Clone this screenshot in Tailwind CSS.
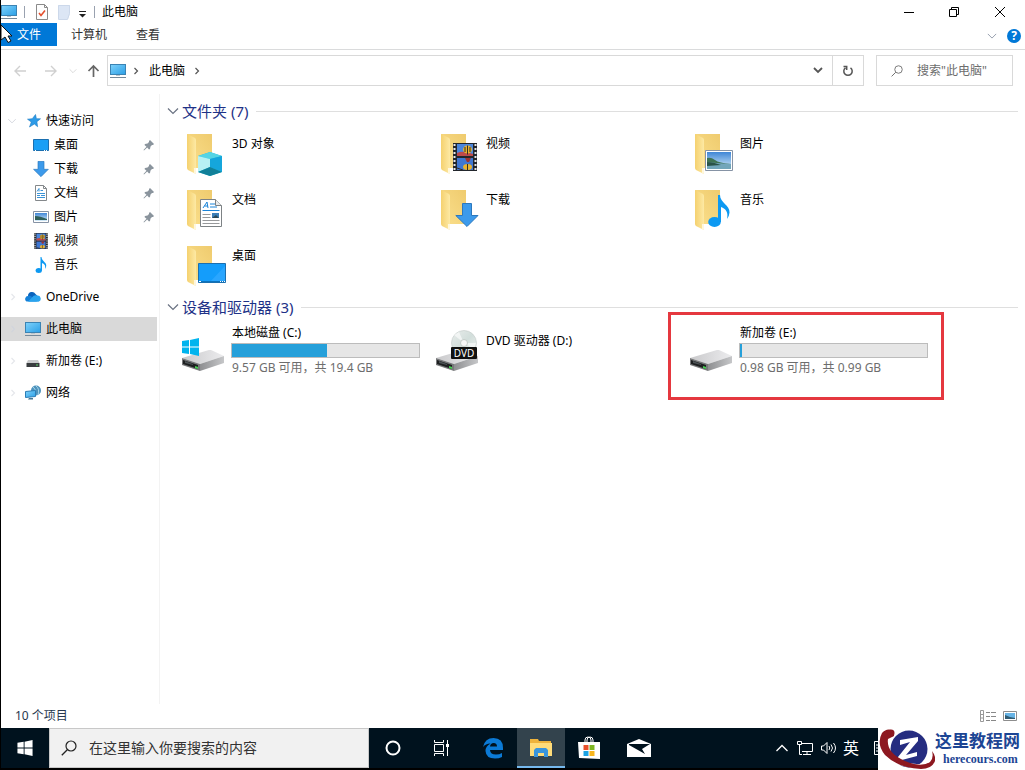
<!DOCTYPE html>
<html lang="zh-CN">
<head>
<meta charset="utf-8">
<meta name="viewport" content="width=device-width, initial-scale=1">
<title>此电脑</title>
<script src="https://cdn.jsdelivr.net/npm/@tailwindcss/browser@4"></script>
</head>
<body class="relative flex min-h-screen flex-col border-l border-black bg-white font-['Noto_Sans','Noto_Sans_CJK_SC',sans-serif] text-xs leading-4 text-black">

<!-- Shared icon symbols -->
<svg class="absolute h-0 w-0" aria-hidden="true">
  <defs>
    <linearGradient id="gFlap" x1="0" x2="1"><stop offset="0" stop-color="#f5d16f"/><stop offset="1" stop-color="#fde9a4"/></linearGradient>
    <linearGradient id="gBack" x1="0" y1="1" x2="1" y2="0"><stop offset="0" stop-color="#fbe08d"/><stop offset="1" stop-color="#efcb6e"/></linearGradient>
    <linearGradient id="gScreen" x1="0" y1="0" x2="1" y2="1"><stop offset="0" stop-color="#7fd2fb"/><stop offset="1" stop-color="#2b9fe6"/></linearGradient>
    <linearGradient id="gTop" x1="0" x2="1"><stop offset="0" stop-color="#c9c9cb"/><stop offset="1" stop-color="#ececee"/></linearGradient>
    <linearGradient id="gSide" x1="0" x2="1"><stop offset="0" stop-color="#8e8f91"/><stop offset="1" stop-color="#c6c7c9"/></linearGradient>
    <linearGradient id="gSky" x1="0" y1="0" x2="0" y2="1"><stop offset="0" stop-color="#3f86d6"/><stop offset="1" stop-color="#d6ecf8"/></linearGradient>
    <linearGradient id="gDisc" x1="0" y1="0" x2="1" y2="1"><stop offset="0" stop-color="#e9eceb"/><stop offset=".5" stop-color="#d2dedb"/><stop offset="1" stop-color="#f1f3f2"/></linearGradient>
    <symbol id="folder" viewBox="0 0 48 48">
      <path d="M5 4h25v34H12z" fill="url(#gBack)"/>
      <path d="M5 4l8 4q1 1 1 2v34l-8-4q-1-1-1-2z" fill="url(#gFlap)"/>
      <path d="M14 38v6l-2-1v-5z" fill="#fff7dc"/>
    </symbol>
    <symbol id="drive" viewBox="0 0 48 48">
      <path d="M0 33L27 25q1 0 2 0l13 6-24 8z" fill="url(#gTop)"/>
      <path d="M18 39l24-8v7L18 46z" fill="url(#gSide)"/>
      <path d="M0 33l18 6v7L0 40z" fill="#77787a"/>
      <path d="M1 35l15 5v4L1 39z" fill="#1d1f20"/>
      <path d="M3 36l8 3v1l-8-2z" fill="#4d5356"/>
      <path d="M13 41l3 1v2l-3-1z" fill="#48d152"/>
    </symbol>
    <symbol id="monitor" viewBox="0 0 16 16">
      <rect x=".5" y="1.5" width="15" height="10" fill="url(#gScreen)" stroke="#3b83b3"/>
      <path d="M6 12h4v1H6z" fill="#b8c4cc"/><path d="M0 14.5h16" stroke="#75899a"/>
    </symbol>
    <symbol id="desktop" viewBox="0 0 28 20">
      <path d="M.5.5h27v19H.5z" fill="#149dfb" stroke="#1a6fb0"/>
      <path d="M12 19L27 3v16z" fill="#2aa6ff"/><path d="M1 18.5h26" stroke="#0c73bd"/>
      <path d="M1 18.5h2M22 18.5h1M24 18.5h1M26 18.5h1" stroke="#fff"/>
    </symbol>
    <symbol id="down" viewBox="0 0 24 24">
      <path d="M7.500 .5h9v12h6.500L12 23.500.8 12.500h6.700z" fill="#3c9aeb" stroke="#2c78bd"/>
    </symbol>
    <symbol id="doc" viewBox="0 0 22 28">
      <path d="M.5.5h15l6 6v21H.5z" fill="#fff" stroke="#7d8285"/><path d="M15.500.5v6h6" fill="#e8eaeb" stroke="#7d8285"/>
      <path d="M3 9l4-6 1 6M4.500 7H8M10 5h5M10 8h7M2.500 11.500h17" fill="none" stroke="#1a84d8"/>
      <path d="M2.500 15.500h8M2.500 18.500h8M2.500 21.500h17M2.500 24.500h17" stroke="#97999b"/>
      <path d="M12 14h7v5h-7z" fill="#3d7fb8"/><path d="M12 19l4-3 3 3z" fill="#2b4855"/>
    </symbol>
    <symbol id="photo" viewBox="0 0 28 21">
      <path d="M.5.5h27v20H.5z" fill="#fff" stroke="#8693a5"/>
      <path d="M2 2h24v17H2z" fill="url(#gSky)"/>
      <path d="M2 8q4-1 8 2t16 4v1H2z" fill="#3f7353"/><path d="M2 12q8 1 24 2v5H2z" fill="#72a6ba"/><path d="M2 12q6 0 14 3l-14 1z" fill="#2a5347"/>
    </symbol>
    <symbol id="film" viewBox="0 0 24 28">
      <path d="M0 0h24v28H0z" fill="#22262c"/>
      <path d="M1.500 1v26M22.500 1v26" stroke="#e9e9e9" stroke-width="2" stroke-dasharray="2 2"/>
      <path d="M4 1h16v12H4z" fill="#4b86dc"/><path d="M4 15h16v12H4z" fill="#3f77d2"/>
      <path d="M4 10q6-3 16 1v2H4z" fill="#be4a4a"/>
      <ellipse cx="14.500" cy="6.500" rx="4.500" ry="4" fill="#e9b32f"/><path d="M14.500 2.500v9M12 4v5M17 4v5" stroke="#322c25"/>
      <path d="M12 15h6l-2 4h-2z" fill="#9c3333"/><ellipse cx="14.500" cy="24" rx="4.500" ry="3" fill="#e9b32f"/><path d="M14.500 21v6M4 25l6 2" stroke="#322c25"/>
    </symbol>
    <symbol id="note" viewBox="0 0 22 32">
      <ellipse cx="6.500" cy="27" rx="6.300" ry="5" fill="#0d99f2"/>
      <path d="M10 0h2c0 8 10 10 9.500 17.500q-.3 4-2.500 6.500c1.500-7-1-10-6-12v15h-3z" fill="#0d99f2"/>
    </symbol>
    <symbol id="winlogo" viewBox="0 0 17 18">
      <path d="M0 3l7-1v6.500H0zM8 2l9-2v8.500H8zM0 9.500h7V16l-7-1zM8 9.500h9V18l-9-2z" fill="currentColor"/>
    </symbol>
    <symbol id="pin" viewBox="0 0 12 12">
      <path d="M7 1l4 4-1 1H9L7.500 7.500 7 10 6 10.500 4.200 8.500 1 11.500.5 11l3-3.200L1.500 6l.5-1 2.500-.5L6 3V2z" fill="#8a949d"/>
    </symbol>
    <symbol id="chevR" viewBox="0 0 8 8"><path d="M2.500 1l3 3-3 3" fill="none" stroke="currentColor" stroke-width="1.200"/></symbol>
    <symbol id="chevD" viewBox="0 0 12 8"><path d="M1 1.500l5 5 5-5" fill="none" stroke="currentColor" stroke-width="1.200"/></symbol>
    <symbol id="lens" viewBox="0 0 16 16"><circle cx="10" cy="6" r="5" fill="none" stroke="currentColor" stroke-width="1.200"/><path d="M6.300 9.700L.8 15.200" stroke="currentColor" stroke-width="1.300"/></symbol>
  </defs>
</svg>

<!-- Title bar -->
<header class="flex h-[23px] items-center">
  <svg class="h-4 w-4 shrink-0"><use href="#monitor"/></svg>
  <span class="ml-[7px] h-3 w-px bg-gray-400"></span>
  <button class="ml-[9px] h-4 w-4" aria-label="属性"><svg class="h-4 w-4" viewBox="0 0 16 16"><path d="M2.500.5h8l3 3v12h-11z" fill="#fdfdfd" stroke="#8a8a8a"/><path d="M10.500.5v3h3" fill="none" stroke="#8a8a8a"/><path d="M5 9l2 2.500L11 6.500" fill="none" stroke="#e4502e" stroke-width="1.600"/></svg></button>
  <button class="ml-1.5 h-4 w-4" aria-label="新建文件夹"><svg class="h-4 w-4" viewBox="0 0 16 16"><path d="M2 1h12v8l-2 6H2z" fill="#dce6f5"/><path d="M2.500 1.500h11v8l-2 6h-9z" fill="none" stroke="#ccd8ea"/></svg></button>
  <button class="ml-1 h-4 w-3" aria-label="自定义快速访问工具栏"><svg class="h-4 w-3" viewBox="0 0 12 16"><path d="M3 7.500h7" stroke="#222"/><path d="M3 10h7l-3.500 3.500z" fill="#222"/></svg></button>
  <span class="ml-1.5 h-3 w-px bg-gray-400"></span>
  <h1 class="ml-[7px] grow">此电脑</h1>
  <button class="flex h-5 w-[45px] items-center justify-center" aria-label="最小化"><svg class="h-3 w-3" viewBox="0 0 12 12"><path d="M1 6.500h10" stroke="#000"/></svg></button>
  <button class="flex h-5 w-[46px] items-center justify-center" aria-label="还原"><svg class="h-3 w-3" viewBox="0 0 12 12"><path d="M1.500 3.500h7v7h-7zM3.500 3V1.500h7v7H9" fill="none" stroke="#000"/></svg></button>
  <button class="mr-0.5 flex h-5 w-[46px] items-center justify-center" aria-label="关闭"><svg class="h-3 w-3" viewBox="0 0 12 12"><path d="M1 1l10 10M11 1L1 11" stroke="#000"/></svg></button>
</header>

<!-- Ribbon tabs -->
<nav class="flex h-[27px] items-start border-b border-[#dadbdc] text-[#333]">
  <button class="h-[23px] w-14 bg-[#0078d7] text-white">文件</button>
  <button class="ml-1 h-6 w-14">计算机</button>
  <button class="ml-[7px] h-6 w-12">查看</button>
  <button class="mt-[9px] mr-2 ml-auto h-2 w-3 text-gray-400" aria-label="展开功能区"><svg class="h-2 w-2.5"><use href="#chevD"/></svg></button>
  <button class="mt-1.5 mr-1 h-3.5 w-3.5 rounded-full bg-[#0078d7] text-xs leading-[14px] font-bold text-white" aria-label="帮助">?</button>
</nav>

<!-- Address row -->
<div class="mt-[5px] flex h-[31px] items-center pr-3">
  <div class="flex w-[106px] items-center text-[#d0d0d0]">
    <button class="ml-3 h-4 w-4" aria-label="后退"><svg class="h-4 w-4" viewBox="0 0 16 16"><path d="M13 8H2M7 3L2 8l5 5" fill="none" stroke="currentColor" stroke-width="1.400"/></svg></button>
    <button class="ml-3.5 h-4 w-4" aria-label="前进"><svg class="h-4 w-4" viewBox="0 0 16 16"><path d="M2 8h11M8 3l5 5-5 5" fill="none" stroke="currentColor" stroke-width="1.400"/></svg></button>
    <button class="ml-2.5 flex h-4 w-2 items-center" aria-label="最近位置"><svg class="h-1.5 w-2"><use href="#chevD"/></svg></button>
    <button class="ml-2 h-4 w-4 text-[#666]" aria-label="向上"><svg class="h-4 w-4" viewBox="0 0 16 16"><path d="M8.500 14V3M3.500 8l5-5 5 5" fill="none" stroke="currentColor" stroke-width="1.700"/></svg></button>
  </div>
  <div class="flex h-full grow items-center border border-[#d9d9d9]">
    <svg class="ml-0.5 h-4 w-4 shrink-0"><use href="#monitor"/></svg>
    <svg class="ml-1.5 h-2 w-2 shrink-0 text-[#555]"><use href="#chevR"/></svg>
    <a href="#" class="ml-[9px]">此电脑</a>
    <svg class="ml-2 h-2 w-2 shrink-0 text-[#555]"><use href="#chevR"/></svg>
    <button class="ml-auto flex h-full w-7 items-center justify-center text-[#555]" aria-label="历史记录"><svg class="h-[7px] w-2.5" viewBox="0 0 10 7"><path d="M1 1l4 4 4-4" fill="none" stroke="currentColor" stroke-width="1.800"/></svg></button>
    <button class="flex h-full w-[31px] items-center justify-center border-l border-[#d9d9d9] text-[#555]" aria-label="刷新"><svg class="h-3 w-3" viewBox="0 0 12 12"><path d="M8.500 2.800a4.200 4.200 0 1 1-5 0M1.500 1.500h3.200v3.500" fill="none" stroke="currentColor" stroke-width="1.500"/></svg></button>
  </div>
  <label class="ml-3 flex h-full w-[137px] items-center border border-[#d9d9d9] text-[#6d6d6d]">
    <svg class="ml-3.5 h-3 w-3 shrink-0"><use href="#lens"/></svg>
    <input type="search" aria-label="搜索此电脑" placeholder='搜索"此电脑"' class="ml-3.5 w-0 grow bg-transparent outline-none placeholder:text-[#6d6d6d]">
  </label>
</div>

<!-- Navigation pane and content -->
<div class="flex grow">
  <nav class="mt-2 w-[159px] shrink-0 border-r border-[#f3f3f3] pt-[15px] pr-0.5">
    <a href="#" class="flex h-6 items-center pl-1.5"><svg class="h-1.5 w-2.5 text-gray-300"><use href="#chevD"/></svg><svg class="ml-2.5 h-3.5 w-3.5" viewBox="0 0 14 14"><path d="M8.500.5l.9 4.200 4.100.1-3.600 2.900.7 5L7.400 10 2.500 13l1.800-5L.5 5.200l4.800-.5z" fill="#2d9be8" stroke="#1c7cc4" stroke-width=".6"/></svg><span class="ml-[5px]">快速访问</span></a>
    <a href="#" class="flex h-6 items-center pl-8"><svg class="h-3 w-4" viewBox="0 0 16 12"><path d="M.5.5h15v11H.5z" fill="#1a9ff5" stroke="#1a6fb0"/><path d="M2 11.500h1M11 11.500h1M13 11.500h1" stroke="#fff"/></svg><span class="ml-[5px] grow">桌面</span><svg class="mr-0.5 h-3 w-3"><use href="#pin"/></svg></a>
    <a href="#" class="flex h-6 items-center pl-8"><svg class="h-4 w-4"><use href="#down"/></svg><span class="ml-[5px] grow">下载</span><svg class="mr-0.5 h-3 w-3"><use href="#pin"/></svg></a>
    <a href="#" class="flex h-6 items-center pl-8"><svg class="h-4 w-4" viewBox="0 0 16 16"><path d="M2.500.5h8l3 3v12h-11z" fill="#fff" stroke="#84888b"/><path d="M10.500.5v3h3" fill="none" stroke="#84888b"/><path d="M4 6.500l2-3v3M7.500 5.500H10M4 8.500h8M4 10.500h3M8 10.500h4M4 12.500h8" fill="none" stroke="#3b93d6"/></svg><span class="ml-[5px] grow">文档</span><svg class="mr-0.5 h-3 w-3"><use href="#pin"/></svg></a>
    <a href="#" class="flex h-6 items-center pl-8"><svg class="h-3 w-4" viewBox="0 0 16 12"><path d="M.5.5h15v11H.5z" fill="#fff" stroke="#8693a5"/><path d="M2 2h12v8H2z" fill="url(#gSky)"/><path d="M2 5q5 0 12 3v1H2z" fill="#2f5f5a"/></svg><span class="ml-[5px] grow">图片</span><svg class="mr-0.5 h-3 w-3"><use href="#pin"/></svg></a>
    <a href="#" class="flex h-6 items-center pl-8"><svg class="h-4 w-4"><use href="#film"/></svg><span class="ml-[5px]">视频</span></a>
    <a href="#" class="flex h-6 items-center pl-8"><svg class="h-4 w-4"><use href="#note"/></svg><span class="ml-[5px]">音乐</span></a>
    <a href="#" class="mt-2 flex h-6 items-center pl-2"><svg class="h-2 w-2 text-gray-200"><use href="#chevR"/></svg><svg class="ml-2 h-4 w-4" viewBox="0 0 16 16"><path d="M3 7a4 4 0 0 1 7.500-2l2 2L8 11H2z" fill="#0a63bd"/><path d="M1.500 12.500A3 3 0 0 1 3 7q2-1 4 1l5 4.500z" fill="#1580d8"/><path d="M7 8.500q2-3 5-2a3.200 3.200 0 0 1 1.500 6.200H3z" fill="#2aa4ee"/></svg><span class="ml-[5px]">OneDrive</span></a>
    <a href="#" aria-current="page" class="mt-2 flex h-6 items-center bg-[#d9d9d9] pl-2"><svg class="h-2 w-2 text-gray-300"><use href="#chevR"/></svg><svg class="ml-2 h-4 w-4"><use href="#monitor"/></svg><span class="ml-[5px]">此电脑</span></a>
    <a href="#" class="mt-2 flex h-6 items-center pl-2"><svg class="h-2 w-2 text-gray-200"><use href="#chevR"/></svg><svg class="ml-2 h-4 w-4" viewBox="0 0 16 16"><path d="M3 7h10l1.500 3h-13z" fill="#c9cacc"/><path d="M1.500 10h13v4h-13z" fill="#393c3f"/><path d="M11 12h2" stroke="#5fd36a"/></svg><span class="ml-[5px]">新加卷 (E:)</span></a>
    <a href="#" class="mt-2 flex h-6 items-center pl-2"><svg class="h-2 w-2 text-gray-200"><use href="#chevR"/></svg><svg class="ml-2 h-4 w-4" viewBox="0 0 16 16"><circle cx="11" cy="5.500" r="5" fill="#4d93bd"/><path d="M8 2q3 2 2 5M11 1q4 3 2 9" fill="none" stroke="#a9d6ea"/><path d="M.5 6.500l10-1v6l-10 1z" fill="url(#gScreen)" stroke="#2c7db5"/><path d="M4 13h4v1.500H3z" fill="#457694"/></svg><span class="ml-[5px]">网络</span></a>
  </nav>

  <main class="grow pt-[13px] pr-[7px] pl-[7px]">
    <section>
      <h2 class="flex h-6 items-center text-[15px] leading-5 text-[#1e3287]"><svg class="mr-[3px] h-2 w-3 text-gray-500"><use href="#chevD"/></svg>文件夹 (7)<span class="ml-2 h-px grow bg-[#dfdfdf]"></span></h2>
      <ul class="grid grid-cols-[repeat(auto-fill,254px)] pt-1 pl-[15px]">
        <li class="flex h-14 pt-[3px]"><svg class="h-12 w-12" viewBox="0 0 48 48"><use href="#folder"/><path d="M16 26l12-4 12 4v16l-12 4-12-4z" fill="#27bcd8"/><path d="M16 26l12-4 12 4-12 3z" fill="#55d4e4"/><path d="M16 26l12 3v8l-12 5z" fill="#b8f1f3"/><path d="M28 29l12-3v16l-12-5z" fill="#15a6dc"/><path d="M28 37l12 5-12 4-12-4z" fill="#118099"/></svg><a href="#" class="ml-0.5 pt-1.5">3D 对象</a></li>
        <li class="flex h-14 pt-[3px]"><svg class="h-12 w-12" viewBox="0 0 48 48"><use href="#folder"/><use href="#film" x="17" y="13" width="24" height="28"/></svg><a href="#" class="ml-0.5 pt-1.5">视频</a></li>
        <li class="flex h-14 pt-[3px]"><svg class="h-12 w-12" viewBox="0 0 48 48"><use href="#folder"/><use href="#photo" x="15" y="20" width="28" height="21"/></svg><a href="#" class="ml-0.5 pt-1.5">图片</a></li>
        <li class="flex h-14 pt-[3px]"><svg class="h-12 w-12" viewBox="0 0 48 48"><use href="#folder"/><use href="#doc" x="18" y="13" width="22" height="28"/></svg><a href="#" class="ml-0.5 pt-1.5">文档</a></li>
        <li class="flex h-14 pt-[3px]"><svg class="h-12 w-12" viewBox="0 0 48 48"><use href="#folder"/><use href="#down" x="19" y="17" width="24" height="24"/></svg><a href="#" class="ml-0.5 pt-1.5">下载</a></li>
        <li class="flex h-14 pt-[3px]"><svg class="h-12 w-12" viewBox="0 0 48 48"><use href="#folder"/><use href="#note" x="18" y="9" width="22" height="32"/></svg><a href="#" class="ml-0.5 pt-1.5">音乐</a></li>
        <li class="flex h-14 pt-[3px]"><svg class="h-12 w-12" viewBox="0 0 48 48"><use href="#folder"/><use href="#desktop" x="16" y="21" width="28" height="20"/></svg><a href="#" class="ml-0.5 pt-1.5">桌面</a></li>
      </ul>
    </section>
    <section>
      <h2 class="flex h-6 items-center text-[15px] leading-5 text-[#1e3287]"><svg class="mr-[3px] h-2 w-3 text-gray-500"><use href="#chevD"/></svg>设备和驱动器 (3)<span class="ml-2 h-px grow bg-[#dfdfdf]"></span></h2>
      <ul class="grid grid-cols-[repeat(auto-fill,254px)] pl-[15px]">
        <li class="flex h-16 pt-1.5">
          <svg class="h-12 w-12 shrink-0" viewBox="0 0 48 48"><use href="#drive"/><use href="#winlogo" x="0" y="13" width="17" height="18" class="text-[#00b4ee]"/></svg>
          <div class="ml-px w-[189px]"><a href="#" class="block pl-px">本地磁盘 (C:)</a><div role="progressbar" aria-label="已用空间" aria-valuenow="51" class="mt-0.5 h-[15px] border border-[#bcbcbc] bg-[#e6e6e6]"><div class="h-full bg-[#26a0da]" style="width:51%"></div></div><p class="mt-0.5 pl-px text-[#6d6d6d]">9.57 GB 可用，共 19.4 GB</p></div>
        </li>
        <li class="flex h-16 pt-1.5">
          <svg class="h-12 w-12 shrink-0" viewBox="0 0 48 48"><use href="#drive"/><circle cx="28" cy="18" r="12.500" fill="url(#gDisc)" stroke="#c3c9c7" stroke-width=".6"/><path d="M28 18L18 10l5-3zM28 18l10 6 2-6z" fill="#fff" opacity=".6"/><circle cx="28" cy="18" r="3.500" fill="#f7f7f7" stroke="#b5bbb9" stroke-width=".7"/><rect x="15" y="22" width="26" height="12" rx="1" fill="#111"/><text x="28" y="32" text-anchor="middle" font-family="Noto Sans, sans-serif" font-size="10" fill="#fff">DVD</text></svg>
          <a href="#" class="ml-0.5 pt-2">DVD 驱动器 (D:)</a>
        </li>
        <li class="relative flex h-16 pt-1.5">
          <svg class="h-12 w-12 shrink-0" viewBox="0 0 48 48"><use href="#drive"/></svg>
          <div class="ml-px w-[189px]"><a href="#" class="block pl-px">新加卷 (E:)</a><div role="progressbar" aria-label="已用空间" aria-valuenow="1" class="mt-0.5 h-[15px] border border-[#bcbcbc] bg-[#e6e6e6]"><div class="h-full bg-[#26a0da]" style="width:1%"></div></div><p class="mt-0.5 pl-px text-[#6d6d6d]">0.98 GB 可用，共 0.99 GB</p></div>
          <span class="pointer-events-none absolute -top-[7px] -left-[22px] h-[88px] w-[276px] border-3 border-[#e5383f]"></span>
        </li>
      </ul>
    </section>
  </main>
</div>

<!-- Status bar -->
<footer class="flex h-6 items-center pr-2 pl-3.5 text-[#26384f]">
  <span class="grow">10 个项目</span>
  <button class="h-3 w-4" aria-label="详细信息"><svg class="h-3 w-4" viewBox="0 0 16 12"><path d="M.5.5h3v11h-3zM.5 4.500h3M.5 8h3" fill="none" stroke="#999"/><path d="M6 2.500h4M11 2.500h5M6 6.500h4M11 6.500h5M6 10.500h4M11 10.500h5" stroke="#888"/></svg></button>
  <button class="ml-[7px] h-3 w-3.5" aria-label="大图标"><svg class="h-3 w-3.5" viewBox="0 0 14 12"><path d="M.5 1.500h13v9H.5z" fill="#fff" stroke="#8d8d8d"/><path d="M2 3h10v6H2z" fill="#67b4e6"/><path d="M2 5l5 2 5 1v1H2z" fill="#315c74"/></svg></button>
</footer>

<!-- Taskbar -->
<div class="flex h-[42px] border-b-2 border-black bg-[#00121e] text-white">
  <button class="flex w-12 items-center justify-center" aria-label="开始"><svg class="h-4 w-4"><use href="#winlogo"/></svg></button>
  <label class="flex w-80 items-center border border-[#c8c8c8] bg-[#f1f1f1] text-[#222]">
    <svg class="ml-[11px] h-4 w-4 shrink-0"><use href="#lens"/></svg>
    <input type="search" aria-label="搜索" placeholder="在这里输入你要搜索的内容" class="ml-3 w-0 grow bg-transparent text-sm outline-none placeholder:text-[#333]">
  </label>
  <button class="flex w-12 items-center justify-center" aria-label="Cortana"><svg class="h-4 w-4" viewBox="0 0 16 16"><circle cx="8" cy="8" r="6.500" fill="none" stroke="#fff" stroke-width="2"/></svg></button>
  <button class="flex w-12 items-center justify-center" aria-label="任务视图"><svg class="h-4 w-4" viewBox="0 0 16 16"><path d="M1.500 4.500h9v7h-9zM1.500 0v2.500h9V0M1.500 16v-2.500h9V16M14.500 0v16" fill="none" stroke="#fff"/><path d="M13 4h3v3h-3z" fill="#fff"/></svg></button>
  <button class="ml-1 flex w-12 items-center justify-center" aria-label="Edge"><svg class="h-[22px] w-[22px]" viewBox="0 0 22 22"><path d="M1 10Q3 1 11.500 1 21 1 21 11v2H8q.3 4.500 6 4.500 3.500 0 6-1.500v4q-3 1.500-7 1.500Q4 21.500 3.500 14q0-5 5-7.500Q3.500 6.500 1 10zM8 9.500h7q0-3.500-3.300-3.500T8 9.500z" fill="#0b7ad6"/></svg></button>
  <button class="flex w-12 items-center justify-center border-b-2 border-[#76b9ed] bg-[#33434d]" aria-label="文件资源管理器"><svg class="mt-px h-5 w-6" viewBox="0 0 24 20"><path d="M1 1h8l1 2h12v15H1z" fill="#eeb33c"/><path d="M1 5h22v13H1z" fill="#ffdc7a"/><path d="M5 19v-7l2-2h10l2 2v7h-4v-4H9v4z" fill="#3a95dc"/></svg></button>
  <button class="flex w-12 items-center justify-center" aria-label="应用商店"><svg class="h-6 w-6" viewBox="0 0 24 24"><path d="M8 7V4q0-3 3-3t3 3v3M10 7V4q0-3 3-3t3 3v3" fill="none" stroke="#fff"/><path d="M1 6h22v17l-21-1z" fill="#fff"/><path d="M6.500 9h5v5h-5z" fill="#e8502b"/><path d="M12.500 9h5v5h-5z" fill="#7fb722"/><path d="M6.500 15h5v5h-5z" fill="#1ca3e4"/><path d="M12.500 15h5v5h-5z" fill="#f8b61d"/></svg></button>
  <button class="ml-0.5 flex w-12 items-center justify-center" aria-label="邮件"><svg class="h-5 w-6" viewBox="0 0 24 20"><path d="M0 6l12-5 12 5v13H0z" fill="#fff"/><path d="M2 6h21l-8 5 3 5L2 7z" fill="#00121e"/></svg></button>
  <div class="ml-auto flex items-center gap-2 pr-[147px]">
    <button aria-label="显示隐藏的图标"><svg class="h-2 w-3" viewBox="0 0 12 8"><path d="M.5 7L6 1.500 11.500 7" fill="none" stroke="#fff" stroke-width="1.300"/></svg></button>
    <button class="ml-px" aria-label="网络"><svg class="h-4 w-4" viewBox="0 0 16 16"><path d="M5 3.500h10.500v8H5M10 12v2.500M6 14.500h8M.5 1.500h4v3h-4zM2.500 5v9.500H5" fill="none" stroke="#fff"/></svg></button>
    <button aria-label="音量"><svg class="h-4 w-4" viewBox="0 0 16 16"><path d="M.5 6h2L6 2.500v11L2.500 10h-2zM8 6q1.500 2 0 4M10 4.500q3 3.500 0 7M12.500 3q4 5 0 10" fill="none" stroke="#fff"/></svg></button>
    <button class="-ml-0.5 text-base" aria-label="输入法">英</button>
    <button class="ml-[7px] h-3.5 w-1 overflow-hidden" aria-label="触摸键盘"><svg class="h-3.5 w-4" viewBox="0 0 16 14"><path d="M.5.5h15v13H.5zM2 4h12M2 7h12M2 10h12" fill="none" stroke="#fff"/></svg></button>
  </div>
</div>

<!-- Site watermark over the taskbar corner -->
<div class="absolute right-0 bottom-0 flex h-[42px] w-[147px] items-center bg-white">
  <svg class="h-[42px] w-[57px] shrink-0" viewBox="0 0 57 42"><circle cx="31" cy="21" r="18.500" fill="#252c80"/><path d="M22 12l18-3v4L28 27l11-3v4l-19 5v-4l12-15-10 3z" fill="#fff"/><path d="M12 6Q2 18 11 28t33 10q8-1 10-6" fill="none" stroke="#fff" stroke-width="4"/><path d="M16 3Q9-1 4 5-2 16 7 27q13 13 36 14 11 0 14-8 1-5-3-10 2 7-2 11-9 6-25-1Q8 25 10 11l6-3z" fill="#8d1820"/><circle cx="13" cy="5" r="3.500" fill="#8d1820"/></svg>
  <div class="whitespace-nowrap text-[#1c4594]"><p class="text-[17px] leading-5 font-bold">这里教程网</p><p class="pl-2 font-['Liberation_Serif',serif] text-xs leading-4 font-bold">herecours.com</p></div>
</div>

<!-- Mouse pointer -->
<svg class="pointer-events-none absolute top-6 left-0 h-5 w-3" viewBox="0 0 12 20"><path d="M0 1l11 11H7l3 5-3 1.500-3-5.500-4 3z" fill="#fff" stroke="#111"/></svg>
</body>
</html>
